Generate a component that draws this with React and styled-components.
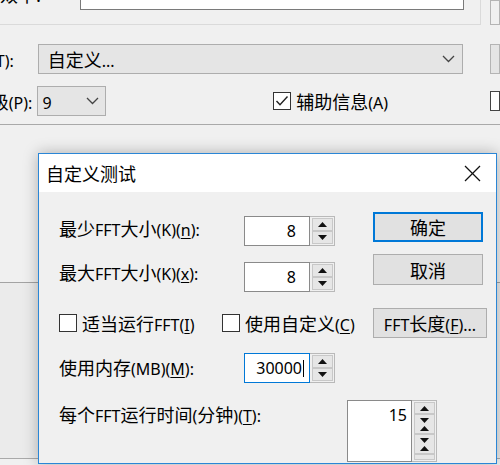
import React from 'react';
import styled, { createGlobalStyle } from 'styled-components';

const GlobalStyle = createGlobalStyle`
  html, body { margin: 0; padding: 0; }
  body {
    background: #f0f0f0;
    font-family: "Noto Sans CJK SC", "Noto Sans", sans-serif;
    color: #000;
  }
  * { box-sizing: border-box; }
`;

const Page = styled.div`
  position: relative;
  width: 500px;
  height: 465px;
  overflow: hidden;
  background: #f0f0f0;
  font-size: 18px;
  display: flex;
  flex-direction: column;
`;

const TopSection = styled.section`
  flex: 0 0 125px;
  border-bottom: 1px solid #a9a9a9;
  display: flex;
  flex-direction: column;
`;

const MiddleSection = styled.section`
  flex: 0 0 158px;
  border-bottom: 1px solid #a3a3a3;
`;

const LowerSection = styled.section`
  flex: 0 0 176px;
  background: #ebebeb;
  border-bottom: 1px solid #a9a9a9;
`;

const BgRow = styled.div`
  display: flex;
  align-items: ${p => p.$align || 'center'};
  height: ${p => p.$h}px;
  margin-top: ${p => p.$mt || 0}px;
`;

const GroupFrame = styled.div`
  width: 484px;
  height: 25px;
  border-right: 1px solid #dadada;
  border-bottom: 1px solid #dadada;
  display: flex;
  align-items: flex-start;
`;

const CutLabel = styled.span`
  width: 80px;
  margin-top: -16px;
  line-height: 20px;
  white-space: nowrap;
`;

const TextBox = styled.div`
  width: 384px;
  height: 31px;
  margin-top: -21px;
  background: #fff;
  border: 1px solid #7a7a7a;
`;

const EdgeStub = styled.div`
  margin-left: ${p => p.$ml}px;
  width: 10px;
  height: ${p => p.$h}px;
  border: 1px solid ${p => p.$c || '#b4b4b4'};
  background: ${p => p.$bg || 'transparent'};
`;

const ClipLabel = styled.div`
  width: 38px;
  padding-right: ${p => p.$pr}px;
  display: flex;
  justify-content: flex-end;
  overflow: hidden;
  white-space: nowrap;
`;

const Combo = styled.div`
  width: ${p => p.$w}px;
  height: 30px;
  background: #e5e5e5;
  border: 1px solid #adadad;
  display: flex;
  align-items: center;
  justify-content: space-between;
  padding: 0 ${p => p.$pr}px 0 ${p => p.$pl}px;
`;

const Lat = styled.span`
  font-family: "Noto Sans", sans-serif;
  font-size: 16px;
`;

const U = styled.span`
  text-decoration: underline;
  text-underline-offset: 2px;
  text-decoration-thickness: 1px;
`;

const isLat = ch => ch.charCodeAt(0) < 0x2000;

function Txt({ s }) {
  const out = [];
  let i = 0;
  let key = 0;
  while (i < s.length) {
    const lat = isLat(s[i]);
    let j = i;
    while (j < s.length && isLat(s[j]) === lat) j++;
    const run = s.slice(i, j);
    if (lat) {
      const parts = [];
      let plain = '';
      for (let k = 0; k < run.length; k++) {
        if (run[k] === '_' && k + 1 < run.length) {
          if (plain) { parts.push(plain); plain = ''; }
          parts.push(<U key={k}>{run[k + 1]}</U>);
          k++;
        } else {
          plain += run[k];
        }
      }
      if (plain) parts.push(plain);
      out.push(<Lat key={key++}>{parts}</Lat>);
    } else {
      out.push(<React.Fragment key={key++}>{run}</React.Fragment>);
    }
    i = j;
  }
  return <span>{out}</span>;
}

const Chevron = () => (
  <svg width="13" height="8" viewBox="0 0 13 8">
    <polyline points="1,1 6.5,6.5 12,1" fill="none" stroke="#444" strokeWidth="1.3" />
  </svg>
);

const CheckWrap = styled.label`
  display: flex;
  align-items: center;
  gap: 5px;
  width: ${p => (p.$w ? `${p.$w}px` : 'auto')};
  margin-left: ${p => p.$ml || 0}px;
  white-space: nowrap;
`;

const Box = styled.span`
  flex: 0 0 auto;
  width: 18px;
  height: 18px;
  border: 1px solid #333;
  background: #fff;
  display: flex;
  align-items: center;
  justify-content: center;
`;

const Tick = () => (
  <svg width="14" height="12" viewBox="0 0 14 12">
    <polyline points="1.5,6 5,9.8 12.5,1.5" fill="none" stroke="#222" strokeWidth="1.4" />
  </svg>
);

const Dialog = styled.div`
  position: absolute;
  left: 38px;
  top: 153px;
  width: 459px;
  height: 311px;
  border: 1px solid #2a86d6;
  background: #f0f0f0;
  box-shadow: 0 0 14px rgba(0, 0, 0, 0.28);
  display: flex;
  flex-direction: column;
`;

const TitleBar = styled.div`
  flex: 0 0 38px;
  background: #fff;
  display: flex;
  align-items: center;
  justify-content: space-between;
  padding: 0 15px 0 7px;
`;

const CloseX = () => (
  <svg width="17" height="17" viewBox="0 0 17 17">
    <line x1="1" y1="1" x2="16" y2="16" stroke="#111" strokeWidth="1.3" />
    <line x1="16" y1="1" x2="1" y2="16" stroke="#111" strokeWidth="1.3" />
  </svg>
);

const Body = styled.div`
  padding-left: 20px;
  display: flex;
  flex-direction: column;
`;

const Row = styled.div`
  display: flex;
  align-items: ${p => p.$align || 'center'};
  height: ${p => p.$h}px;
  margin-top: ${p => p.$mt}px;
`;

const Label = styled.div`
  width: ${p => p.$w}px;
  align-self: ${p => p.$self || 'center'};
  line-height: 28px;
  white-space: nowrap;
`;

const Spin = styled.div`
  width: ${p => p.$w}px;
  height: ${p => p.$h}px;
  align-self: ${p => p.$self || 'center'};
  display: flex;
  background: #f0f0f0;
`;

const Field = styled.div`
  flex: 1;
  background: #fff;
  border: 1px solid ${p => (p.$focused ? '#0078d7' : '#8a8a8a')};
  display: flex;
  align-items: ${p => (p.$top ? 'flex-start' : 'center')};
  justify-content: flex-end;
  padding: ${p => (p.$top ? '3px' : '0')} ${p => p.$pr}px 0 0;
  font-family: "Noto Sans", sans-serif;
  font-size: 16px;
`;

const Caret = styled.span`
  display: inline-block;
  width: 1px;
  height: 17px;
  margin-left: 1px;
  background: #000;
`;

const Arrows = styled.div`
  width: 25px;
  display: flex;
  flex-direction: column;
  border: 1px solid #b9b9b9;
  border-left: none;
  padding: 1px 1px 1px 2px;
`;

const ArrowBtn = styled.div`
  flex: ${p => (p.$h ? `0 0 ${p.$h}px` : '1')};
  background: #e6e6e6;
  border: 1px solid #c8c8c8;
  display: flex;
  flex-direction: column;
  align-items: center;
  justify-content: center;
  gap: 3px;
`;

const Tri = ({ down }) => (
  <svg width="9" height="5" viewBox="0 0 9 5">
    <polygon points={down ? '0,0 9,0 4.5,5' : '0,5 9,5 4.5,0'} fill="#111" />
  </svg>
);

const Button = styled.div`
  width: ${p => p.$w}px;
  height: ${p => p.$h || 30}px;
  margin-left: ${p => p.$ml || 0}px;
  align-self: ${p => p.$self || 'center'};
  background: #e1e1e1;
  border: 1px solid ${p => (p.$primary ? '#0078d7' : '#adadad')};
  box-shadow: ${p => (p.$primary ? 'inset 0 0 0 1px #0078d7' : 'none')};
  display: flex;
  align-items: center;
  justify-content: center;
  white-space: nowrap;
`;

function SpinControl({ value, focused, w = 91, h = 30, self }) {
  return (
    <Spin $w={w} $h={h} $self={self}>
      <Field $focused={focused} $pr={focused ? 5 : 13}>
        {value}
        {focused && <Caret />}
      </Field>
      <Arrows>
        <ArrowBtn><Tri /></ArrowBtn>
        <ArrowBtn><Tri down /></ArrowBtn>
      </Arrows>
    </Spin>
  );
}

function TallSpin({ value }) {
  return (
    <Spin $w={90} $h={62} $self="flex-start">
      <Field $top $pr={4}>{value}</Field>
      <Arrows>
        <ArrowBtn $h={12}><Tri /></ArrowBtn>
        <ArrowBtn $h={20}><Tri down /><Tri /></ArrowBtn>
        <ArrowBtn $h={20}><Tri down /><Tri /></ArrowBtn>
        <ArrowBtn />
      </Arrows>
    </Spin>
  );
}

export default function App() {
  return (
    <>
      <GlobalStyle />
      <Page>
        <TopSection>
          <BgRow $h={25} $align="flex-start">
            <GroupFrame>
              <CutLabel>效率:</CutLabel>
              <TextBox />
            </GroupFrame>
            <EdgeStub $ml={9} $h={25} />
          </BgRow>
          <BgRow $h={30} $mt={19}>
            <ClipLabel $pr={24}><Txt s="方式(T):" /></ClipLabel>
            <Combo $w={432} $pl={9} $pr={7}>
              <Txt s="自定义..." />
              <Chevron />
            </Combo>
            <EdgeStub $ml={27} $h={30} $bg="#e5e5e5" />
          </BgRow>
          <BgRow $h={30} $mt={12}>
            <ClipLabel $pr={5}><Txt s="级(P):" /></ClipLabel>
            <Combo $w={70} $pl={4} $pr={6}>
              <Txt s="9" />
              <Chevron />
            </Combo>
            <CheckWrap $ml={167}>
              <Box><Tick /></Box>
              <Txt s="辅助信息(A)" />
            </CheckWrap>
            <EdgeStub $ml={102} $h={20} $c="#444" $bg="#fff" />
          </BgRow>
        </TopSection>
        <MiddleSection />
        <LowerSection />

        <Dialog>
          <TitleBar>
            <span>自定义测试</span>
            <CloseX />
          </TitleBar>
          <Body>
            <Row $h={34} $mt={20}>
              <Label $w={185}><Txt s="最少FFT大小(K)(_n):" /></Label>
              <SpinControl value="8" self="flex-end" />
              <Button $w={110} $ml={38} $self="flex-start" $primary>确定</Button>
            </Row>
            <Row $h={38} $mt={8}>
              <Label $w={185}><Txt s="最大FFT大小(K)(_x):" /></Label>
              <SpinControl value="8" self="flex-end" />
              <Button $w={110} $h={31} $ml={38} $self="flex-start">取消</Button>
            </Row>
            <Row $h={30} $mt={16}>
              <CheckWrap $w={163}>
                <Box />
                <Txt s="适当运行FFT(_I)" />
              </CheckWrap>
              <CheckWrap $w={151}>
                <Box />
                <Txt s="使用自定义(_C)" />
              </CheckWrap>
              <Button $w={114}><Txt s="FFT长度(_F)..." /></Button>
            </Row>
            <Row $h={30} $mt={15}>
              <Label $w={185}><Txt s="使用内存(MB)(_M):" /></Label>
              <SpinControl value="30000" focused />
            </Row>
            <Row $h={62} $mt={17} $align="flex-start">
              <Label $w={288} $self="flex-start"><Txt s="每个FFT运行时间(分钟)(_T):" /></Label>
              <TallSpin value="15" />
            </Row>
          </Body>
        </Dialog>
      </Page>
    </>
  );
}
